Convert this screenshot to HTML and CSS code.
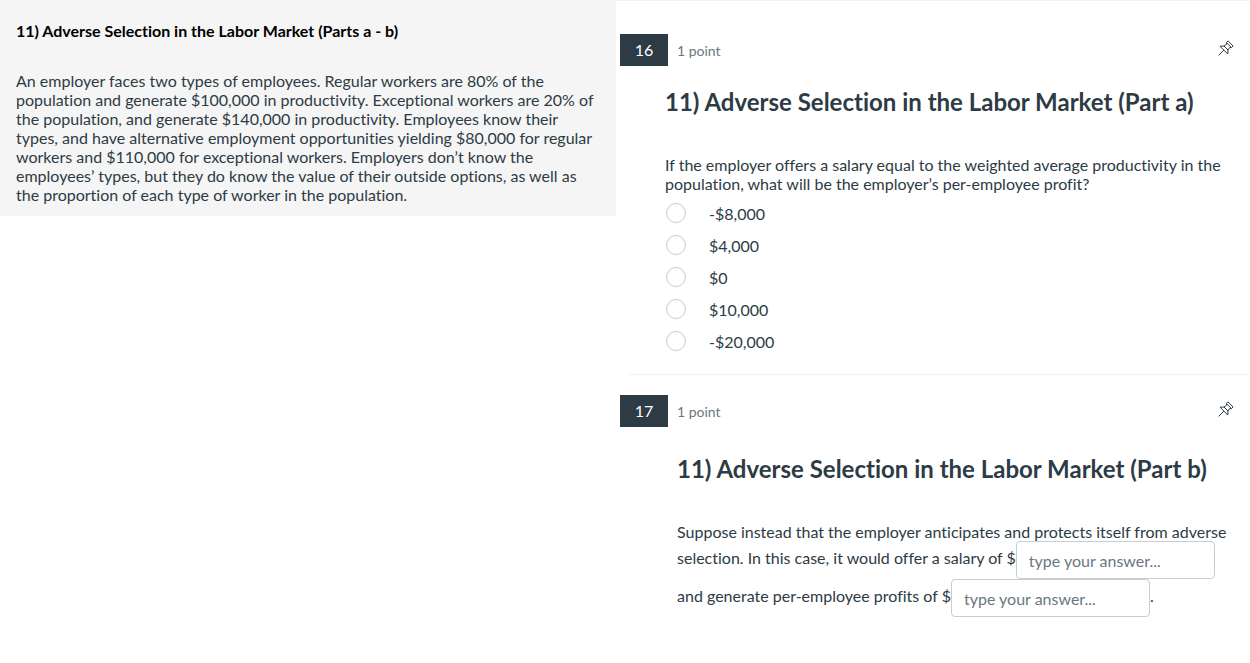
FILE: index.html
```html
<!DOCTYPE html>
<html lang="en">
<head>
  <meta charset="UTF-8">
  <meta name="viewport" content="width=device-width, initial-scale=1.0">
  <title>Quiz</title>
  <link rel="stylesheet" href="styles.css">
</head>
<body>
  <div class="quiz">
    <aside class="stimulus">
      <h1 class="stimulus-title">11) Adverse Selection in the Labor Market (Parts a - b)</h1>
      <p class="stimulus-text">An employer faces two types of employees. Regular workers are 80% of the population and generate $100,000 in productivity. Exceptional workers are 20% of the population, and generate $140,000 in productivity. Employees know their types, and have alternative employment opportunities yielding $80,000 for regular workers and $110,000 for exceptional workers. Employers don’t know the employees’ types, but they do know the value of their outside options, as well as the proportion of each type of worker in the population.</p>
    </aside>

    <main class="questions">
      <section class="question">
        <header class="question-header">
          <span class="number">16</span>
          <span class="points">1 point</span>
          <button type="button" class="pin" aria-label="Pin question 16">
            <svg width="16" height="16" viewBox="0 0 16 16" fill="none" stroke="#2d3b45">
              <path d="M10 .9 15.1 6 13.4 7.6 8.4 2.6ZM8.6 2.8 8.4 4.4 6 6 2 6.2 9.8 14 10 10 11.6 7.6 13.2 7.4M6 6 10 10M5.8 10.2 .6 15.4"/>
            </svg>
          </button>
        </header>
        <div class="question-body">
          <h2>11) Adverse Selection in the Labor Market (Part a)</h2>
          <fieldset class="choices">
            <legend>If the employer offers a salary equal to the weighted average productivity in the population, what will be the employer’s per-employee profit?</legend>
            <label class="choice"><input type="radio" name="profit"> -$8,000</label>
            <label class="choice"><input type="radio" name="profit"> $4,000</label>
            <label class="choice"><input type="radio" name="profit"> $0</label>
            <label class="choice"><input type="radio" name="profit"> $10,000</label>
            <label class="choice"><input type="radio" name="profit"> -$20,000</label>
          </fieldset>
        </div>
      </section>

      <section class="question">
        <header class="question-header">
          <span class="number">17</span>
          <span class="points">1 point</span>
          <button type="button" class="pin" aria-label="Pin question 17">
            <svg width="16" height="16" viewBox="0 0 16 16" fill="none" stroke="#2d3b45">
              <path d="M10 .9 15.1 6 13.4 7.6 8.4 2.6ZM8.6 2.8 8.4 4.4 6 6 2 6.2 9.8 14 10 10 11.6 7.6 13.2 7.4M6 6 10 10M5.8 10.2 .6 15.4"/>
            </svg>
          </button>
        </header>
        <div class="question-body blanks">
          <h2>11) Adverse Selection in the Labor Market (Part b)</h2>
          <p class="intro">Suppose instead that the employer anticipates and protects itself from adverse</p>
          <p class="blank-line">
            <label for="salary">selection. In this case, it would offer a salary of $</label>
            <input type="text" id="salary" placeholder="type your answer...">
          </p>
          <p class="blank-line">
            <label for="profits">and generate per-employee profits of $</label>
            <input type="text" id="profits" placeholder="type your answer...">
            <span>.</span>
          </p>
        </div>
      </section>
    </main>
  </div>
</body>
</html>
```
FILE: styles.css
```css
* {
  box-sizing: border-box;
}
body {
  margin: 0;
  font-family: Lato, "Liberation Sans", sans-serif;
  font-size: 16px;
  line-height: 19px;
  font-variant-ligatures: none;
  color: #2d3b45;
  background-color: #fff;
}
.quiz {
  display: grid;
  grid-template-columns: 616fr 634fr;
  align-items: start;
}
.stimulus {
  padding: 21px 16px 12px;
  background-color: #f5f5f5;
}
.stimulus-title {
  margin: 0 0 31px;
  font-size: 16px;
  line-height: 19px;
  font-weight: 700;
  color: #000;
}
.stimulus-text {
  margin: 0;
}
.questions {
  border-top: 1px solid #f2f2f2;
  padding-top: 33px;
}
.question + .question {
  margin: 17px 0 0 12px;
  padding-top: 20px;
  border-top: 1px solid #f2f2f2;
}
.question-header {
  display: flex;
  align-items: center;
  padding: 0 16px 0 4px;
}
.question + .question .question-header,
.question + .question .question-body {
  margin-left: -12px;
}
.number {
  width: 48px;
  line-height: 32px;
  text-align: center;
  color: #fff;
  background-color: #2d3b45;
}
.points {
  margin-left: 9px;
  font-size: 14px;
  color: #6b7780;
}
.pin {
  margin: 0 0 4px auto;
  padding: 0;
  border: 0;
  background: none;
  cursor: pointer;
}
.pin svg {
  display: block;
}
.question-body {
  padding: 21px 24px 0 49px;
}
.question-body h2 {
  margin: 0 0 39px;
  font-size: 24px;
  line-height: 29px;
  font-weight: 700;
}
.choices {
  margin: 0;
  padding: 0;
  border: 0;
}
.choices legend {
  padding: 0;
  margin-bottom: 4px;
}
.choice {
  display: flex;
  align-items: center;
  height: 32px;
}
.choice input {
  appearance: none;
  width: 20px;
  height: 20px;
  margin: 0 23px 0 1px;
  border: 1px solid #c7cdd1;
  border-radius: 50%;
}
.choice input:checked {
  border: 6px solid #2d3b45;
}
.question-body.blanks {
  padding: 27px 16px 0 61px;
}
.intro,
.blank-line {
  margin: 0;
}
.blank-line {
  display: flex;
  line-height: 34px;
}
.blank-line input {
  width: 199px;
  height: 38px;
  padding: 0 12px;
  border: 1px solid #c7cdd1;
  border-radius: 4px;
  font: inherit;
  color: inherit;
}
.blank-line input::placeholder {
  color: #6b7780;
}
```
